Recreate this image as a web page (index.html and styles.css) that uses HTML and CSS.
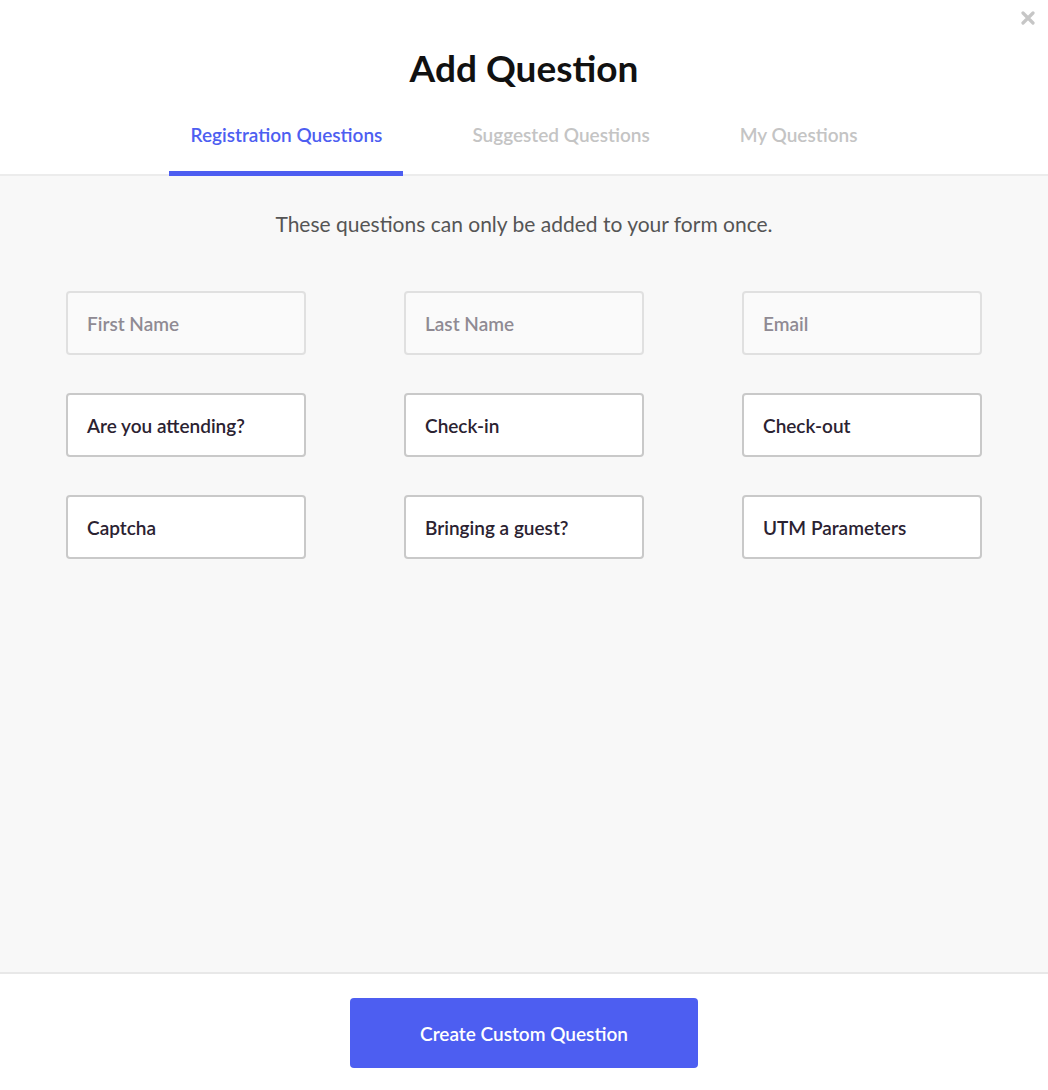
FILE: index.html
```html
<!DOCTYPE html>
<html lang="en">
<head>
  <meta charset="UTF-8" />
  <meta name="viewport" content="width=device-width, initial-scale=1.0" />
  <title>Add Question</title>
  <link rel="stylesheet" href="styles.css">
</head>
<body>
  <div class="modal">
    <button class="close" aria-label="Close">
      <svg width="14" height="14" viewBox="0 0 14 14">
        <path d="M2 2 L12 12 M12 2 L2 12" stroke="#c6c6c6" stroke-width="3.2" stroke-linecap="round" />
      </svg>
    </button>

    <div class="header">
      <h1>Add Question</h1>
      <div class="tabs">
        <div class="tab active">Registration Questions</div>
        <div class="tab">Suggested Questions</div>
        <div class="tab">My Questions</div>
      </div>
    </div>

    <div class="content">
      <p class="hint">These questions can only be added to your form once.</p>
      <div class="grid">
        <div class="card disabled">First Name</div>
        <div class="card disabled">Last Name</div>
        <div class="card disabled">Email</div>
        <div class="card">Are you attending?</div>
        <div class="card">Check-in</div>
        <div class="card">Check-out</div>
        <div class="card">Captcha</div>
        <div class="card">Bringing a guest?</div>
        <div class="card">UTM Parameters</div>
      </div>
    </div>

    <div class="footer">
      <button class="primary">Create Custom Question</button>
    </div>
  </div>
</body>
</html>
```

FILE: styles.css
```css
body {
  margin: 0;
  font-family: Lato, "Open Sans", sans-serif;
  background: #fff;
  color: #2b2231;
}
.modal {
  position: relative;
  display: flex;
  flex-direction: column;
  height: 100vh;
}
.close {
  position: absolute;
  top: 11px;
  right: 13px;
  padding: 0;
  border: none;
  background: none;
  cursor: pointer;
  line-height: 0;
}
.header {
  text-align: center;
  border-bottom: 2px solid #ececec;
}
.header h1 {
  margin: 0;
  padding-top: 46px;
  font-size: 37px;
  line-height: 44px;
  font-weight: 700;
  color: #111;
}
.tabs {
  display: flex;
  justify-content: center;
  gap: 48px;
  margin-top: 34px;
  margin-bottom: -2px;
}
.tab {
  padding: 0 21px 25px;
  font-size: 19px;
  line-height: 22px;
  font-weight: 600;
  color: #c4c4c4;
  border-bottom: 5px solid transparent;
  cursor: pointer;
}
.tab.active {
  color: #4d5ef1;
  border-bottom-color: #4d5ef1;
}
.content {
  flex: 1;
  background: #f8f8f8;
  padding: 36px 66px 0;
}
.hint {
  margin: 0 0 55px;
  text-align: center;
  font-size: 21px;
  line-height: 24px;
  color: #555;
}
.grid {
  display: grid;
  grid-template-columns: repeat(3, 240px);
  justify-content: space-between;
  row-gap: 38px;
  width: 916px;
}
.card {
  box-sizing: border-box;
  height: 64px;
  display: flex;
  align-items: center;
  padding: 0 19px;
  background: #fff;
  border: 2px solid #c9c9c9;
  border-radius: 4px;
  font-size: 19px;
  font-weight: 600;
  color: #2b2231;
  cursor: pointer;
}
.card.disabled {
  background: #fafafa;
  border-color: #e0e0e0;
  color: #8f8a93;
  cursor: default;
}
.footer {
  border-top: 2px solid #e8e8e8;
  padding: 24px 0 22px;
  display: flex;
  justify-content: center;
}
.primary {
  width: 348px;
  height: 70px;
  border: none;
  border-radius: 4px;
  background: #4d5ef1;
  color: #fff;
  font-family: inherit;
  font-size: 19px;
  font-weight: 600;
  cursor: pointer;
}
```
